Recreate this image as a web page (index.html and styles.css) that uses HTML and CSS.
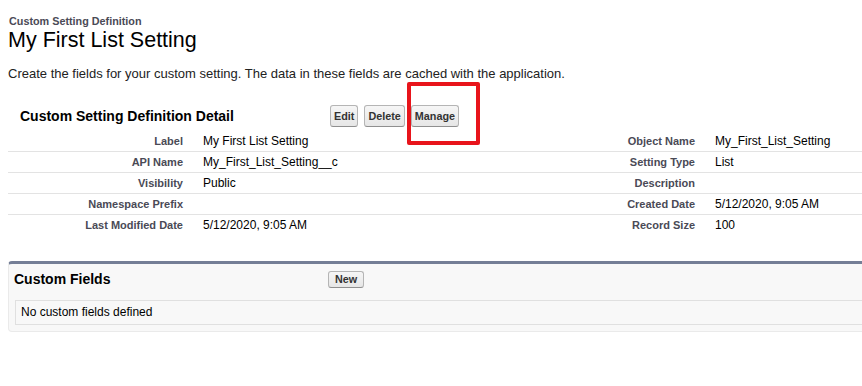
FILE: index.html
```html
<!DOCTYPE html>
<html>
<head>
  <title>Custom Setting Definition</title>
  <link rel="stylesheet" href="styles.css">
</head>
<body>
  <div class="page">
    <div class="page-title">
      <h2 class="page-type">Custom Setting Definition</h2>
      <h1 class="page-name">My First List Setting</h1>
    </div>

    <p class="page-desc">Create the fields for your custom setting. The data in these fields are cached with the application.</p>

    <div class="detail">
      <div class="detail-header">
        <h2 class="block-title">Custom Setting Definition Detail</h2>
        <div class="buttons">
          <button class="btn">Edit</button>
          <button class="btn">Delete</button>
          <button class="btn">Manage</button>
        </div>
        <div class="highlight"></div>
      </div>

      <div class="detail-list">
        <div class="row">
          <div class="label">Label</div>
          <div class="value">My First List Setting</div>
          <div class="label">Object Name</div>
          <div class="value">My_First_List_Setting</div>
        </div>
        <div class="row">
          <div class="label">API Name</div>
          <div class="value">My_First_List_Setting__c</div>
          <div class="label">Setting Type</div>
          <div class="value">List</div>
        </div>
        <div class="row">
          <div class="label">Visibility</div>
          <div class="value">Public</div>
          <div class="label">Description</div>
          <div class="value"></div>
        </div>
        <div class="row">
          <div class="label">Namespace Prefix</div>
          <div class="value"></div>
          <div class="label">Created Date</div>
          <div class="value">5/12/2020, 9:05 AM</div>
        </div>
        <div class="row last">
          <div class="label">Last Modified Date</div>
          <div class="value">5/12/2020, 9:05 AM</div>
          <div class="label">Record Size</div>
          <div class="value">100</div>
        </div>
      </div>
    </div>

    <div class="related">
      <div class="related-header">
        <h3 class="related-title">Custom Fields</h3>
        <button class="btn btn-small">New</button>
      </div>
      <div class="related-body">No custom fields defined</div>
    </div>
  </div>
</body>
</html>
```

FILE: styles.css
```css
body {
  font-family: "Liberation Sans", Arial, sans-serif;
  margin: 0;
  padding: 0;
  overflow: hidden;
  color: #000;
}

.page {
  width: 1028px;
  padding: 14px 8px 0 8px;
}

.page-type {
  margin: 0 0 0 1px;
  font-size: 10.8px;
  line-height: 14px;
  font-weight: bold;
  color: #4a4a56;
}

.page-name {
  margin: 0;
  font-size: 21.5px;
  line-height: 24px;
  font-weight: normal;
}

.page-desc {
  margin: 14px 0 0 0;
  font-size: 13px;
  line-height: 16px;
  color: #222;
}

.detail {
  margin-top: 18px;
}

.detail-header {
  position: relative;
  display: flex;
  align-items: center;
  height: 31px;
}

.block-title {
  width: 310px;
  margin: 0;
  padding-left: 12px;
  font-size: 14px;
  font-weight: bold;
}

.buttons {
  display: flex;
  gap: 6px;
}

.btn {
  font-family: "Liberation Sans", Arial, sans-serif;
  font-size: 10.8px;
  font-weight: bold;
  color: #333;
  height: 22px;
  padding: 0 3px;
  border: 1px solid #b5b5b5;
  border-bottom-color: #8f8f8f;
  border-radius: 3px;
  background: linear-gradient(#f6f6f6, #e6e6e6);
}

.btn-small {
  height: 17px;
  padding: 0 6px;
}

.highlight {
  position: absolute;
  left: 399px;
  top: -18px;
  width: 65px;
  height: 55px;
  border: 4px solid #e8141b;
  border-radius: 2px;
}

.row {
  display: grid;
  grid-template-columns: 185px 329px 183px 1fr;
  height: 20px;
  align-items: center;
  border-bottom: 1px solid #e3e3e3;
}

.row.last {
  border-bottom: none;
}

.label {
  text-align: right;
  padding-right: 10px;
  font-size: 11px;
  font-weight: bold;
  color: #4a4a56;
}

.value {
  padding-left: 10px;
  font-size: 12px;
}

.related {
  margin-top: 26px;
  border-top: 3px solid #747e96;
  border-left: 1px solid #eaeaea;
  border-right: 1px solid #eaeaea;
  border-bottom: 1px solid #eaeaea;
  border-radius: 4px;
  background-color: #f8f8f8;
  padding: 0 0 6px 0;
}

.related-header {
  display: flex;
  align-items: center;
  height: 18px;
  padding: 6px 0 12px 5px;
}

.related-title {
  width: 314px;
  margin: 0;
  font-size: 14px;
  font-weight: bold;
}

.related-body {
  margin-left: 6px;
  border-top: 1px solid #e0e0e0;
  border-bottom: 1px solid #e0e0e0;
  border-left: 1px solid #e0e0e0;
  height: 23px;
  line-height: 23px;
  padding-left: 5px;
  font-size: 12px;
}
```
